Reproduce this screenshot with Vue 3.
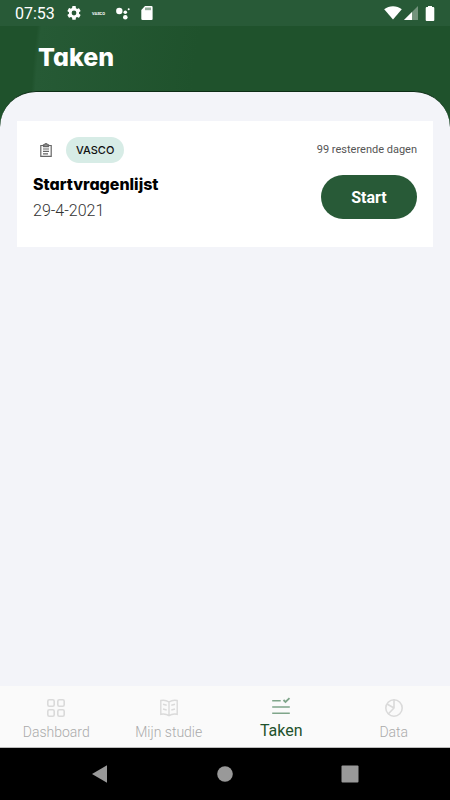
<script setup>
import { ref } from 'vue'

const tasks = [
  { id: 1, study: 'VASCO', title: 'Startvragenlijst', date: '29-4-2021', remaining: 99 }
]

const tabs = [
  { key: 'dashboard', label: 'Dashboard' },
  { key: 'study', label: 'Mijn studie' },
  { key: 'tasks', label: 'Taken' },
  { key: 'data', label: 'Data' }
]

const activeTab = ref('tasks')
</script>

<template>
  <div class="screen">
    <div class="top">
      <div class="status-bar">
        <span class="clock">07:53</span>
        <svg class="gear" width="14" height="14" viewBox="2 2 20 20" fill="#fff">
          <path d="M19.14 12.94c.04-.3.06-.61.06-.94s-.02-.64-.07-.94l2.03-1.58a.49.49 0 0 0 .12-.61l-1.92-3.32a.49.49 0 0 0-.59-.22l-2.39.96a7 7 0 0 0-1.62-.94l-.36-2.54A.48.48 0 0 0 13.92 2h-3.84a.48.48 0 0 0-.48.41l-.36 2.54c-.59.24-1.13.57-1.62.94l-2.39-.96a.48.48 0 0 0-.59.22L2.72 8.87a.48.48 0 0 0 .12.61l2.03 1.58c-.05.3-.07.62-.07.94s.02.64.07.94l-2.03 1.58a.49.49 0 0 0-.12.61l1.92 3.32c.12.22.37.29.59.22l2.39-.96c.5.38 1.03.7 1.62.94l.36 2.54c.05.24.24.41.48.41h3.84c.24 0 .44-.17.47-.41l.36-2.54a7 7 0 0 0 1.62-.94l2.39.96c.22.08.47 0 .59-.22l1.92-3.32a.48.48 0 0 0-.12-.61zM12 15.4a3.4 3.4 0 1 1 0-6.8 3.4 3.4 0 0 1 0 6.8z" />
        </svg>
        <span class="mini">VASCO</span>
        <svg class="assistant" width="14" height="13" viewBox="0 0 14 13" fill="#fff">
          <circle cx="3.3" cy="4" r="3.2" />
          <circle cx="9.3" cy="5.2" r="1.8" />
          <circle cx="12.7" cy="2.3" r="1" />
          <circle cx="9.3" cy="10.2" r="2.3" />
        </svg>
        <svg class="sd" width="12" height="14" viewBox="0 0 12 14">
          <path d="M4 0h6.5A1.2 1.2 0 0 1 11.6 1.2V12.6A1.2 1.2 0 0 1 10.4 14H1.6A1.3 1.3 0 0 1 .3 12.7V4z" fill="#fff" />
          <path d="M5 1.5v2.7M7 1.5v2.7M9 1.5v2.7" stroke="#285a37" stroke-width="1" />
        </svg>
        <div class="signals">
          <svg width="18" height="14" viewBox="0 0 18 14" fill="#fff">
            <path d="M.2 3.2C5.2-.8 12.8-.8 17.800 3.200L9 13.600z" />
          </svg>
          <svg width="14" height="14" viewBox="0 0 14 14">
            <path d="M14 0v14H0z" fill="#fff" opacity=".35" />
            <path d="M8 6v8H0z" fill="#fff" />
          </svg>
          <svg class="battery" width="10" height="15" viewBox="0 0 10 15" fill="#fff">
            <path d="M3 0h4v1h1.2a1.2 1.2 0 0 1 1.1 1.200V14a1 1 0 0 1-1 1H1.700a1 1 0 0 1-1-1V2.200a1.200 1.200 0 0 1 1.100-1.200H3z" />
          </svg>
        </div>
      </div>
      <header class="header">
        <h1 class="title">Taken</h1>
      </header>
    </div>

    <main class="sheet">
      <article v-for="task in tasks" :key="task.id" class="task-card">
        <div class="task-info">
          <div class="task-tags">
            <svg width="12" height="14" viewBox="0 0 12 14" fill="none" stroke="#666" stroke-width="1.2">
              <path d="M3.5 2.5H.8v10.9h10.4V2.5H8.5" />
              <path d="M3.5 3.6V1.9h1.2a1.3 1.3 0 0 1 2.6 0h1.2v1.7z" fill="#999" />
              <path d="M3 6h6M3 8.4h6M3 10.8h5" />
            </svg>
            <span class="study-badge">{{ task.study }}</span>
          </div>
          <h2 class="task-title">{{ task.title }}</h2>
          <span class="task-date">{{ task.date }}</span>
        </div>
        <div class="task-action">
          <span class="task-remaining">{{ task.remaining }} resterende dagen</span>
          <button type="button" class="start-button">Start</button>
        </div>
      </article>
    </main>

    <nav class="tab-bar">
      <button
        v-for="tab in tabs"
        :key="tab.key"
        type="button"
        class="tab"
        :class="{ active: activeTab === tab.key }"
        @click="activeTab = tab.key"
      >
        <svg width="20" height="20" viewBox="0 0 20 20" fill="none" stroke="currentColor" stroke-width="1.6">
          <g v-if="tab.key === 'dashboard'">
            <rect x="1.8" y="1.8" width="6.4" height="6.4" rx="1.5" />
            <rect x="11.8" y="1.8" width="6.4" height="6.4" rx="1.5" />
            <rect x="1.8" y="11.8" width="6.4" height="6.4" rx="1.5" />
            <rect x="11.8" y="11.8" width="6.4" height="6.4" rx="1.5" />
          </g>
          <g v-else-if="tab.key === 'study'" stroke-width="1.4">
            <path d="M10 4C7.5 2.3 4.5 2 1.8 2.5v13.8C4.5 15.6 7.5 16 10 17.7c2.5-1.7 5.5-2.1 8.2-1.4V2.5C15.5 2 12.5 2.3 10 4zv13.7" />
            <path d="M4 6.3l3.7 1M4 11l3.7 1M16 6.3l-3.7 1M16 11l-3.7 1" />
          </g>
          <g v-else-if="tab.key === 'tasks'">
            <path d="M1.2 3.7h8.5M1.2 10h17.6M1.2 16.2h17.6" />
            <path d="M12.5 3l2 2 4-3.8" stroke-width="1.8" />
          </g>
          <g v-else>
            <circle cx="10" cy="10" r="8.2" />
            <path d="M10 1.8V10L4.2 16M10 10L3 6" />
          </g>
        </svg>
        <span class="tab-label">{{ tab.label }}</span>
      </button>
    </nav>

    <div class="system-nav">
      <button type="button" class="system-button" aria-label="Terug">
        <svg width="18" height="18" viewBox="0 0 18 18" fill="#999"><path d="M1 9L16 .3v17.4z" /></svg>
      </button>
      <button type="button" class="system-button" aria-label="Start">
        <svg width="18" height="18" viewBox="0 0 18 18" fill="#999"><circle cx="9" cy="9" r="7.8" /></svg>
      </button>
      <button type="button" class="system-button" aria-label="Overzicht">
        <svg width="18" height="18" viewBox="0 0 18 18" fill="#999"><rect x=".5" y=".5" width="17" height="17" rx="1" /></svg>
      </button>
    </div>
  </div>
</template>

<style>
body {
  background: #f3f4f9;
}
</style>

<style scoped>
.screen {
  display: flex;
  flex-direction: column;
  min-height: 100vh;
  font-family: Roboto, "Liberation Sans", sans-serif;
  background: #f3f4f9;
}
button {
  border: 0;
  padding: 0;
  background: none;
  font-family: inherit;
  cursor: pointer;
}
svg {
  display: block;
  flex-shrink: 0;
}
.top {
  padding-bottom: 36px;
  background: radial-gradient(ellipse 400px 600px at 430px 140px, #1f522c 60%, #265a35 99%, #1f522c 100%);
}
.status-bar {
  display: flex;
  align-items: center;
  height: 26px;
  padding: 0 15px;
  background: #285a37;
  color: #fff;
}
.clock {
  width: 40px;
  padding-top: 2px;
  font-size: 16px;
  line-height: 26px;
}
.gear {
  margin-left: 12px;
}
.mini {
  width: 14px;
  margin-left: 11px;
  font-size: 4px;
  font-weight: 700;
}
.assistant {
  margin-left: 10px;
}
.sd {
  margin-left: 11px;
}
.signals {
  display: flex;
  align-items: center;
  gap: 2px;
  margin-left: auto;
}
.battery {
  margin-left: 5px;
}
.header {
  padding: 13px 38px 16px;
}
.title {
  margin: 0;
  font-family: Inter, "Open Sans", sans-serif;
  font-feature-settings: "cv11";
  font-size: 25px;
  font-weight: 800;
  line-height: 36px;
  color: #fff;
}
.sheet {
  flex: 1;
  margin-top: -36px;
  padding: 29px 17px 16px;
  border-top: 1px solid #0c2d16;
  border-radius: 36px 36px 0 0;
  background: #f3f4f9;
}
.task-card {
  display: flex;
  justify-content: space-between;
  padding: 16px 16px 26px;
  background: #fff;
}
.task-tags {
  display: flex;
  align-items: center;
  gap: 14px;
  padding-left: 7px;
}
.study-badge {
  padding: 0 10px;
  border-radius: 13px;
  background: #d7ece6;
  color: #111;
  font-family: Inter, "Open Sans", sans-serif;
  font-size: 11px;
  font-weight: 500;
  line-height: 26px;
}
.task-title {
  margin: 10px 0 6px;
  font-family: Inter, "Open Sans", sans-serif;
  font-feature-settings: "cv11";
  font-size: 16px;
  font-weight: 800;
  line-height: 22px;
  color: #000;
}
.task-date {
  display: block;
  font-size: 16px;
  font-weight: 300;
  line-height: 20px;
  color: #333;
}
.task-action {
  display: flex;
  flex-direction: column;
  align-items: flex-end;
  gap: 12px;
}
.task-remaining {
  font-size: 11px;
  line-height: 26px;
  color: #555;
}
.start-button {
  width: 96px;
  height: 44px;
  border-radius: 22px;
  background: #285a37;
  color: #fff;
  font-size: 16px;
  font-weight: 700;
}
.tab-bar {
  display: grid;
  grid-template-columns: repeat(4, 1fr);
  height: 61px;
  border-bottom: 1px solid #bbb;
  background: #fafafa;
}
.tab {
  display: flex;
  flex-direction: column;
  align-items: center;
  gap: 4px;
  padding-top: 12px;
  color: #dadada;
}
.tab-label {
  font-size: 14px;
  font-weight: 300;
  line-height: 20px;
  color: #aaa;
}
.tab.active {
  padding-top: 11px;
  color: #7fa58a;
}
.tab.active .tab-label {
  font-size: 16px;
  font-weight: 400;
  color: #1f522c;
}
.system-nav {
  display: flex;
  justify-content: center;
  align-items: center;
  gap: 107px;
  height: 52px;
  background: #000;
}
</style>
